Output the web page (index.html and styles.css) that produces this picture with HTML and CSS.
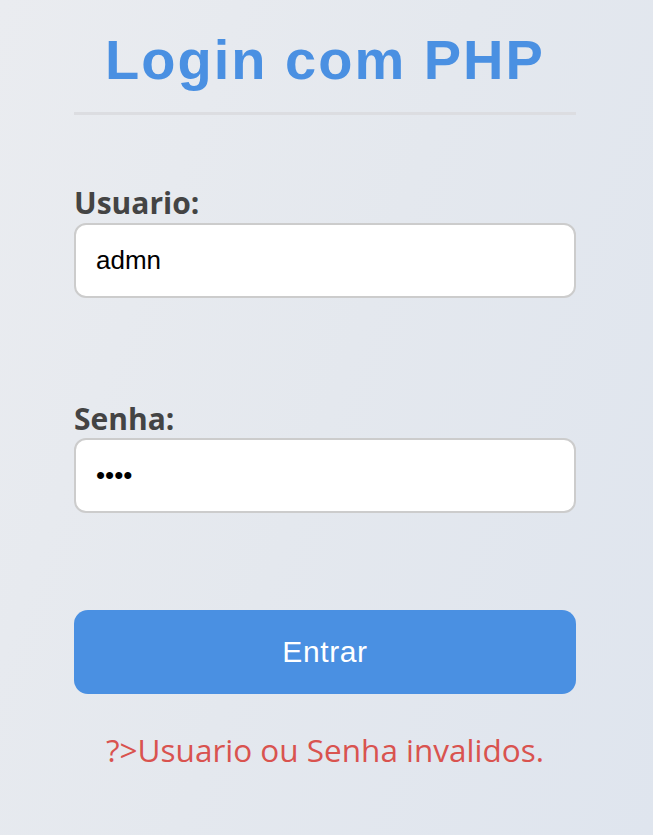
FILE: index.html
```html
<!DOCTYPE html>
<html lang="pt">
<head>
<meta charset="utf-8">
<title>Login com PHP</title>
<link rel="stylesheet" href="styles.css">
</head>
<body>
  <main class="container">
    <h1 class="title">Login com PHP</h1>
    <hr class="divider">
    <form class="login-form">
      <label class="field-label" for="usuario">Usuario:</label>
      <input class="field-input" id="usuario" type="text" value="admn">
      <label class="field-label field-label--second" for="senha">Senha:</label>
      <input class="field-input" id="senha" type="password" value="1234">
      <button class="submit-btn" type="button">Entrar</button>
    </form>
    <p class="error-msg">?&gt;Usuario ou Senha invalidos.</p>
  </main>
</body>
</html>
```

FILE: styles.css
```css
html, body {
  margin: 0;
  padding: 0;
  height: 100%;
}

body {
  background: linear-gradient(110deg, #eaecf0 0%, #e4e8ee 50%, #dfe5ee 100%);
  font-family: "Open Sans", "Noto Sans", sans-serif;
  overflow: hidden;
}

.container {
  width: 502px;
  margin-left: 74px;
  padding-top: 28px;
  display: flex;
  flex-direction: column;
}

.title {
  margin: 0;
  font-family: "Liberation Sans", Arial, sans-serif;
  font-weight: 700;
  font-size: 56px;
  line-height: 64px;
  letter-spacing: 2px;
  color: #4a90e2;
  text-align: center;
}

.divider {
  margin: 20px 0 0;
  border: 0;
  height: 3px;
  background: #dcdde1;
}

.login-form {
  display: flex;
  flex-direction: column;
  margin-top: 71px;
}

.field-label {
  display: block;
  font-weight: 700;
  font-size: 30px;
  line-height: 34px;
  color: #444444;
  margin-bottom: 3px;
}

.field-label--second {
  margin-top: 104px;
  margin-bottom: 2px;
}

.field-input {
  box-sizing: border-box;
  width: 100%;
  height: 75px;
  margin: 0;
  padding: 0 20px;
  border: 2px solid #cccccc;
  border-radius: 12px;
  background: #ffffff;
  font-family: "Liberation Sans", Arial, sans-serif;
  font-size: 26px;
  color: #000000;
  outline: none;
}

.submit-btn {
  margin-top: 97px;
  height: 84px;
  width: 100%;
  border: 0;
  border-radius: 14px;
  background: #4a90e2;
  color: #ffffff;
  font-family: "Liberation Sans", Arial, sans-serif;
  font-size: 30px;
  letter-spacing: 0.6px;
  cursor: pointer;
}

.error-msg {
  margin: 36px 0 0;
  text-align: center;
  font-size: 31.5px;
  line-height: 40px;
  color: #d9534f;
}
```
